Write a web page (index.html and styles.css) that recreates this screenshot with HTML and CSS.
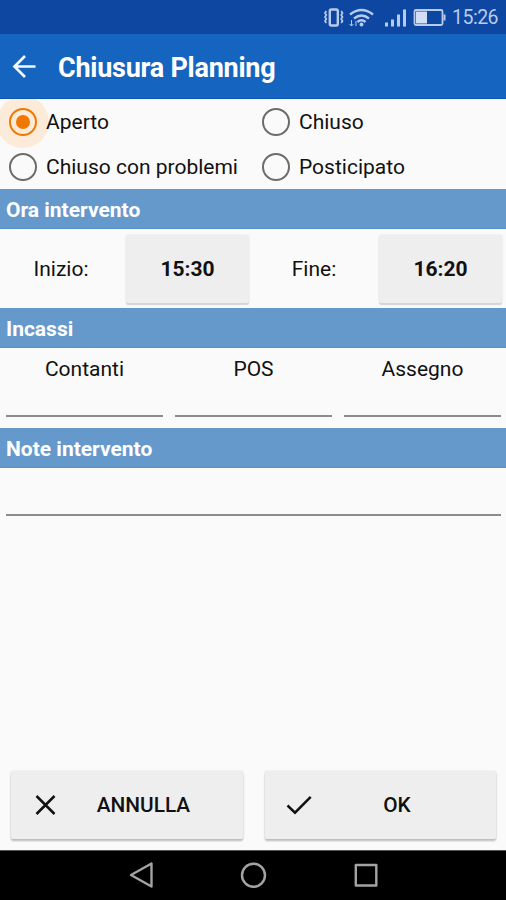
FILE: index.html
```html
<!DOCTYPE html>
<html lang="it">
<head>
<meta charset="utf-8">
<title>Chiusura Planning</title>
<link rel="stylesheet" href="styles.css">
</head>
<body>
<div class="screen">
  <div class="status">
    <svg class="status-icons" width="124" height="34" viewBox="0 0 124 34" fill="none" stroke="#b9cbed">
      <rect x="6.800" y="9.500" width="8" height="16" rx="1.500" stroke-width="2.400"/>
      <path d="M3.300 11l-1.300 2 1.300 2-1.300 2 1.300 2-1.300 2 1.300 2M18.200 11l1.300 2-1.300 2 1.300 2-1.300 2 1.300 2-1.300 2" stroke-width="1.700"/>
      <path d="M27 14.500Q38.500 5.500 50 14.500M31 18.500Q38.500 12.500 46 18.500M34.500 22Q38.500 18.500 42.500 22" stroke-width="2.400"/>
      <circle cx="38.500" cy="24.500" r="1.900" fill="#b9cbed" stroke="none"/>
      <path d="M28.500 20v6M26.500 24l2 2 2-2M33 26v-5" stroke-width="1"/>
      <path d="M63.500 22.500v4M69.500 19.500v7M75.500 14.500v12M81.500 9.500v17" stroke-width="3"/>
      <rect x="91.500" y="10" width="28" height="15" rx="1.500" stroke-width="1.800"/>
      <path d="M93 11.500h11v12H93z" fill="#d3def5" stroke="none"/>
      <path d="M121.500 14.500v6" stroke-width="2"/>
    </svg>
    <span class="clock">15:26</span>
  </div>
  <header class="appbar">
    <svg class="back" width="24" height="24" viewBox="0 0 24 24" fill="none" stroke="#f4f8ff" stroke-width="2.700"><path d="M23.500 12.500H2.500M13 2L2.500 12.500l10.500 10.500"/></svg>
    <h1 class="title">Chiusura Planning</h1>
  </header>
  <div class="radios">
    <label class="radio selected"><span class="ring"></span><span class="label">Aperto</span></label>
    <label class="radio"><span class="ring"></span><span class="label">Chiuso</span></label>
    <label class="radio"><span class="ring"></span><span class="label">Chiuso con problemi</span></label>
    <label class="radio"><span class="ring"></span><span class="label">Posticipato</span></label>
  </div>
  <h2 class="section">Ora intervento</h2>
  <div class="times">
    <span class="time-label">Inizio:</span><button class="time">15:30</button>
    <span class="time-label">Fine:</span><button class="time">16:20</button>
  </div>
  <h2 class="section">Incassi</h2>
  <div class="payments">
    <div class="field">Contanti</div>
    <div class="field">POS</div>
    <div class="field">Assegno</div>
  </div>
  <h2 class="section">Note intervento</h2>
  <div class="notes"></div>
  <div class="actions">
    <button class="action"><svg class="action-icon" width="28" height="28" viewBox="0 0 28 28" fill="none" stroke="#111" stroke-width="2.500"><path d="M5.500 5l18 18M23.500 5L5.500 23"/></svg><span class="action-text">ANNULLA</span></button>
    <button class="action"><svg class="action-icon" width="28" height="28" viewBox="0 0 28 28" fill="none" stroke="#111" stroke-width="2.500"><path d="M2.500 14.500l7.500 7.200L25.700 5.800"/></svg><span class="action-text">OK</span></button>
  </div>
  <nav class="navbar">
    <svg width="506" height="49" viewBox="0 0 506 49" fill="none" stroke="#a3a3a3" stroke-width="2.400" stroke-linejoin="round"><path d="M151.500 12.500v23L131 24z"/><circle cx="253.500" cy="24.200" r="11.500"/><rect x="355.800" y="14" width="20.500" height="20.500"/></svg>
  </nav>
</div>
</body>
</html>
```
FILE: styles.css
```css
* { box-sizing: border-box; }
body { margin: 0; font-family: Roboto, sans-serif; color: #111; background: #fafafa; }
.screen { width: 506px; height: 900px; display: flex; flex-direction: column; overflow: hidden; }
.status { height: 34px; background: #0d47a1; display: flex; align-items: center; padding-left: 323px; flex: none; }
.status-icons { flex: none; }
.clock { color: #b9cbed; font-size: 19.5px; letter-spacing: -0.5px; margin-left: 5px; line-height: 34px; padding-top: 2px; }
.appbar { height: 65px; flex: none; background: #1565c0; border-bottom: 1px solid #0d57b4; display: flex; align-items: center; padding-left: 12px; }
.title { margin: 3px 0 0 22px; color: #fff; font-size: 27px; letter-spacing: -0.25px; font-weight: 700; white-space: nowrap; }
.radios { height: 90px; flex: none; display: grid; grid-template-columns: 253px 253px; grid-template-rows: 45px 45px; overflow: hidden; }
.radio { display: flex; align-items: center; padding-left: 9px; font-size: 21px; white-space: nowrap; }
.ring { width: 28px; height: 28px; border: 2.500px solid #6c6c6c; border-radius: 50%; flex: none; display: flex; align-items: center; justify-content: center; }
.label { margin-left: 9px; }
.selected .ring { border-color: #f07800; box-shadow: 0 0 0 12px #fdebd9; background: #fdebd9; }
.selected .ring::after { content: ""; width: 14px; height: 14px; border-radius: 50%; background: #f07800; }
.section { height: 40px; flex: none; margin: 0; padding: 1px 0 0 6px; line-height: 40px; background: #6599cc; border-bottom: 1px solid #5590c8; color: #fff; font-size: 21px; font-weight: 700; }
.times { height: 79px; flex: none; display: grid; grid-template-columns: 122px 131px 122px 131px; align-items: center; }
.time-label { text-align: center; font-size: 21px; }
button { font-family: inherit; color: #111; border: 0; background: #eee; padding: 0; border-radius: 2px; }
.time { width: 123px; height: 68px; margin-left: 4px; font-size: 21px; font-weight: 700; box-shadow: 0 2px 1px #d5d5d5, 0 0 2px #ddd; }
.payments { height: 80px; flex: none; display: grid; grid-template-columns: repeat(3, 157px); column-gap: 12px; padding: 0 6px; }
.field { height: 69px; border-bottom: 2px solid #8c8c8c; text-align: center; font-size: 21px; line-height: 42px; }
.notes { height: 48px; flex: none; margin: 0 5px 0 6px; border-bottom: 2px solid #8c8c8c; }
.actions { flex: 1; display: flex; align-items: flex-end; gap: 22px; padding: 0 10px 11px 11px; }
.action { width: 232px; height: 68px; display: flex; align-items: center; padding-left: 20px; font-size: 20.8px; font-weight: 500; box-shadow: 0 2px 2px #bbb, 0 0 2px #ddd; }
.action-icon { flex: none; }
.action-text { width: 169px; text-align: center; }
.navbar { height: 50px; flex: none; background: #000; border-top: 1px solid #555; }
.navbar svg { display: block; }
```
